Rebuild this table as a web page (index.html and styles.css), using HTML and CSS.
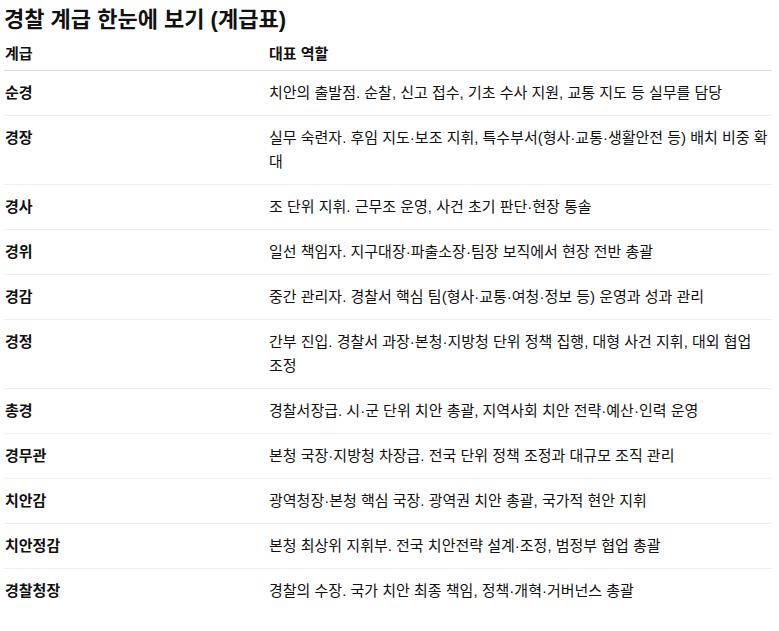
FILE: index.html
```html
<!DOCTYPE html>
<html lang="ko">
<head>
<meta charset="utf-8">
<title>경찰 계급 한눈에 보기</title>
<link rel="stylesheet" href="styles.css">
</head>
<body>
<main class="page">
  <h1 class="title">경찰 계급 한눈에 보기 (계급표)</h1>
  <table class="ranks">
    <colgroup><col class="col-rank"><col class="col-role"></colgroup>
    <thead>
      <tr><th>계급</th><th>대표 역할</th></tr>
    </thead>
    <tbody>
      <tr><td class="rank">순경</td><td>치안의 출발점. 순찰, 신고 접수, 기초 수사 지원, 교통 지도 등 실무를 담당</td></tr>
      <tr><td class="rank">경장</td><td>실무 숙련자. 후임 지도·보조 지휘, 특수부서(형사·교통·생활안전 등) 배치 비중 확대</td></tr>
      <tr><td class="rank">경사</td><td>조 단위 지휘. 근무조 운영, 사건 초기 판단·현장 통솔</td></tr>
      <tr><td class="rank">경위</td><td>일선 책임자. 지구대장·파출소장·팀장 보직에서 현장 전반 총괄</td></tr>
      <tr><td class="rank">경감</td><td>중간 관리자. 경찰서 핵심 팀(형사·교통·여청·정보 등) 운영과 성과 관리</td></tr>
      <tr><td class="rank">경정</td><td>간부 진입. 경찰서 과장·본청·지방청 단위 정책 집행, 대형 사건 지휘, 대외 협업 조정</td></tr>
      <tr><td class="rank">총경</td><td>경찰서장급. 시·군 단위 치안 총괄, 지역사회 치안 전략·예산·인력 운영</td></tr>
      <tr><td class="rank">경무관</td><td>본청 국장·지방청 차장급. 전국 단위 정책 조정과 대규모 조직 관리</td></tr>
      <tr><td class="rank">치안감</td><td>광역청장·본청 핵심 국장. 광역권 치안 총괄, 국가적 현안 지휘</td></tr>
      <tr><td class="rank">치안정감</td><td>본청 최상위 지휘부. 전국 치안전략 설계·조정, 범정부 협업 총괄</td></tr>
      <tr><td class="rank">경찰청장</td><td>경찰의 수장. 국가 치안 최종 책임, 정책·개혁·거버넌스 총괄</td></tr>
    </tbody>
  </table>
</main>
</body>
</html>
```

FILE: styles.css
```css
html, body {
  margin: 0;
  padding: 0;
  background: #ffffff;
}

.page {
  padding: 6px 7px 0 4px;
  font-family: "Liberation Sans", "Noto Sans CJK KR", sans-serif;
  color: #111111;
}

.title {
  margin: 0 0 4px 0;
  font-size: 22px;
  line-height: 28px;
  font-weight: 700;
  color: #111111;
}

.ranks {
  width: 768px;
  border-collapse: collapse;
  table-layout: fixed;
  font-size: 15px;
  line-height: 24px;
}

.col-rank {
  width: 264px;
}

.ranks th {
  text-align: left;
  font-weight: 700;
  padding: 4px 4px 4px 1px;
  border-bottom: 1px solid #d9d9d9;
}

.ranks td {
  padding: 10px 4px 10px 1px;
  vertical-align: top;
  border-bottom: 1px solid #eeeeee;
}

.ranks tbody tr:last-child td {
  border-bottom: none;
}

.ranks td.rank {
  font-weight: 700;
}
```
